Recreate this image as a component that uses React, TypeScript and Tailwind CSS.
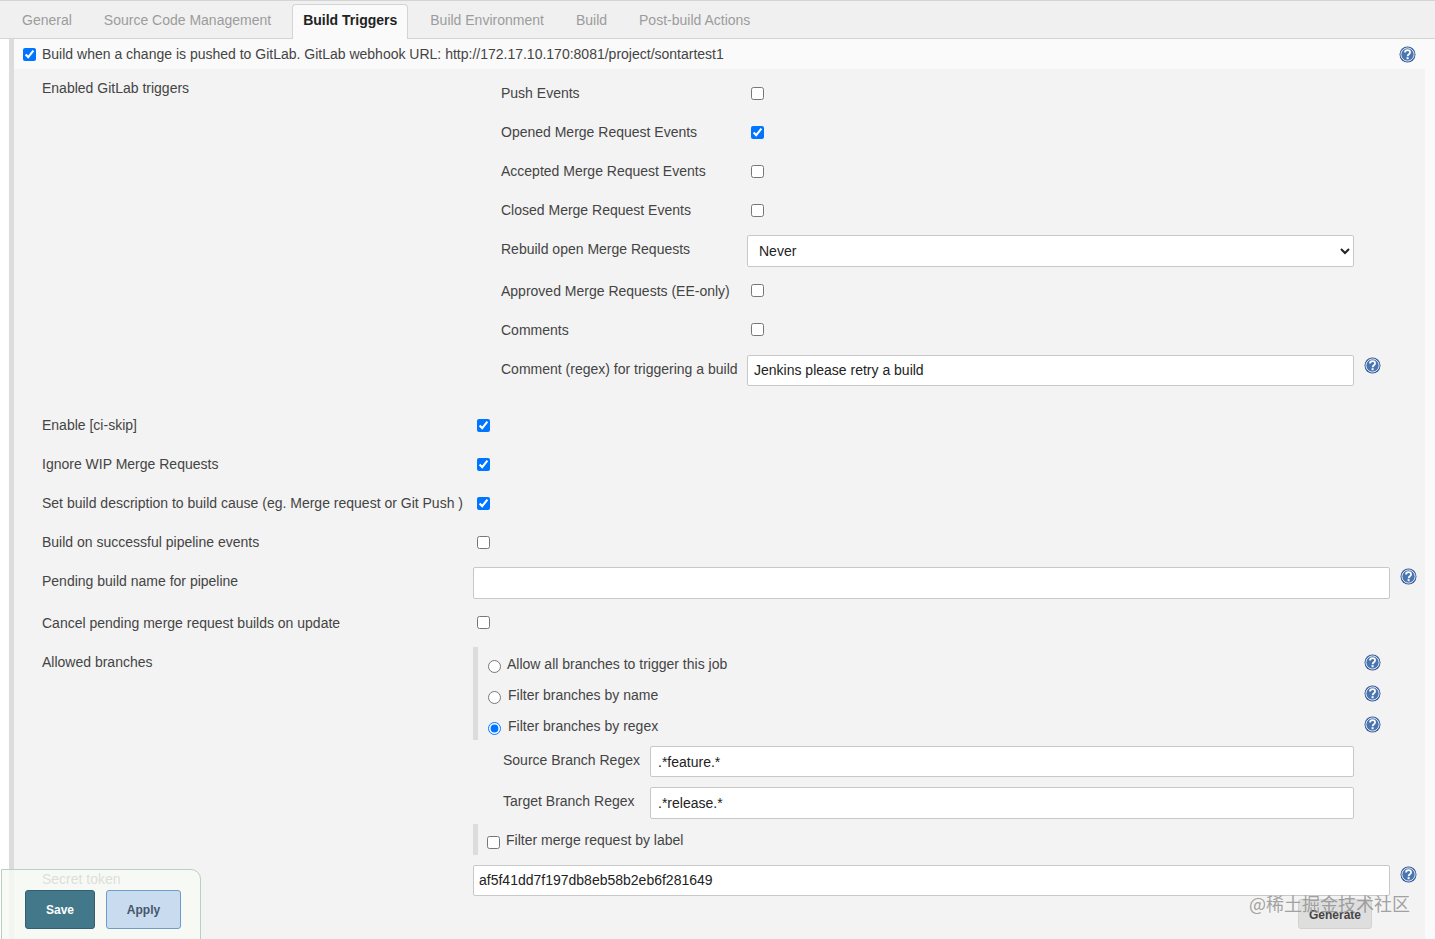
import type { ReactNode } from 'react';

const font = { sans: 'font-["Liberation_Sans",Arial,sans-serif]' };

const tabs = ['General', 'Source Code Management', 'Build Triggers', 'Build Environment', 'Build', 'Post-build Actions'];

function Help() {
  return (
    <svg width="17" height="17" viewBox="0 0 17 17" className="block">
      <circle cx="8.5" cy="8.5" r="8" fill="#2f5597" />
      <circle cx="8.5" cy="8.5" r="6.6" fill="#4a76b0" stroke="#e8eef6" strokeWidth="1" />
      <path d="M6 6.6c0-1.6 1.2-2.4 2.5-2.4s2.6.8 2.6 2.2c0 1.9-2.5 1.9-2.5 3.8" fill="none" stroke="#fff" strokeWidth="1.7" />
      <rect x="7.6" y="11.2" width="2" height="2" fill="#fff" />
    </svg>
  );
}

function Check({ on = false }: { on?: boolean }) {
  return <input type="checkbox" defaultChecked={on} className="block w-[13px] h-[13px]" />;
}

function TextInput({ value = '', className = '' }: { value?: string; className?: string }) {
  return (
    <input
      type="text"
      defaultValue={value}
      className={`block bg-white border border-[#c8c8c8] rounded-[2px] text-[14px] text-[#222] outline-none ${className}`}
    />
  );
}

// row of the nested trigger table, x 473 and on
function TriggerRow({ label, children, className = 'h-[39px]', labelClass = '' }: { label: string; children: ReactNode; className?: string; labelClass?: string }) {
  return (
    <div className={`flex items-center pl-[28px] ${className}`}>
      <div className={`w-[246px] shrink-0 ${labelClass}`}>{label}</div>
      {children}
    </div>
  );
}

// row of the outer form, x 42 and on
function FormRow({ label, children, className = 'h-[39px] items-center', labelClass = '' }: { label: string; children: ReactNode; className?: string; labelClass?: string }) {
  return (
    <div className={`flex pl-[28px] ${className}`}>
      <div className={`w-[431px] shrink-0 ${labelClass}`}>{label}</div>
      {children}
    </div>
  );
}

function BranchRadio({ label, on = false, gap }: { label: string; on?: boolean; gap: string }) {
  return (
    <div className="h-[31px] flex items-center pl-[10px] pr-[44px]">
      <input type="radio" name="branches" defaultChecked={on} className={`block w-[13px] h-[13px] mt-[8px] ${gap}`} />
      <span className="flex-1 mt-[4px]">{label}</span>
      <Help />
    </div>
  );
}

export default function App() {
  return (
    <div className={`relative w-[1435px] h-[939px] overflow-hidden bg-[#fafafa] text-[14px] text-[#444] ${font.sans}`}>
      {/* Tabs */}
      <div className="flex items-end h-[39px] pl-[6px] bg-[#f0f0f0] border-t border-b border-[#d4d4d4]">
        {tabs.map((t) =>
          t === 'Build Triggers' ? (
            <div key={t} className="h-[35px] ml-[5px] mr-[6px] -mb-px px-[10px] pt-[5px] bg-[#fafafa] border border-b-0 border-[#d4d4d4] rounded-t-[4px] font-bold text-[#222]">
              {t}
            </div>
          ) : (
            <div key={t} className="h-[34px] px-[16px] pt-[6px] text-[#9c9c9c]">
              {t}
            </div>
          ),
        )}
      </div>

      <div className="flex h-[900px]">
        <div className="w-[9px] bg-white shrink-0" />
        <div className="w-[5px] bg-[#dcdcdc] shrink-0" />
        <div className="w-[1411px] shrink-0 bg-[#f3f3f3]">
          {/* Top checkbox row */}
          <div className="flex items-center h-[30px] pl-[9px] pr-[9px] bg-[#fafafa]">
            <Check on />
            <span className="ml-[6px] flex-1">
              Build when a change is pushed to GitLab. GitLab webhook URL: http://172.17.10.170:8081/project/sontartest1
            </span>
            <Help />
          </div>

          {/* Enabled triggers */}
          <FormRow label="Enabled GitLab triggers" className="pt-[5px] h-[337px] items-start" labelClass="mt-[4px]">
            <div className="flex-1">
              <TriggerRow label="Push Events"><div className="ml-[4px]"><Check /></div></TriggerRow>
              <TriggerRow label="Opened Merge Request Events"><div className="ml-[4px]"><Check on /></div></TriggerRow>
              <TriggerRow label="Accepted Merge Request Events"><div className="ml-[4px]"><Check /></div></TriggerRow>
              <TriggerRow label="Closed Merge Request Events"><div className="ml-[4px]"><Check /></div></TriggerRow>
              <TriggerRow label="Rebuild open Merge Requests" className="h-[41px]" labelClass="-mt-[2px]">
                <select className="block w-[607px] h-[32px] pl-[7px] bg-white border border-[#c8c8c8] rounded-[2px] text-[#222] outline-none">
                  <option>Never</option>
                </select>
              </TriggerRow>
              <TriggerRow label="Approved Merge Requests (EE-only)" labelClass="mt-[2px]"><div className="ml-[4px]"><Check /></div></TriggerRow>
              <TriggerRow label="Comments" labelClass="mt-[2px]"><div className="ml-[4px]"><Check /></div></TriggerRow>
              <TriggerRow label="Comment (regex) for triggering a build" className="h-[42px]" labelClass="-mt-[2px]">
                <TextInput value="Jenkins please retry a build" className="w-[607px] h-[31px] px-[6px]" />
                <div className="ml-[10px] -mt-[10px]"><Help /></div>
              </TriggerRow>
            </div>
          </FormRow>

          <FormRow label="Enable [ci-skip]"><div className="ml-[4px]"><Check on /></div></FormRow>
          <FormRow label="Ignore WIP Merge Requests"><div className="ml-[4px]"><Check on /></div></FormRow>
          <FormRow label="Set build description to build cause (eg. Merge request or Git Push )"><div className="ml-[4px]"><Check on /></div></FormRow>
          <FormRow label="Build on successful pipeline events"><div className="ml-[4px]"><Check /></div></FormRow>
          <FormRow label="Pending build name for pipeline" className="h-[41px] items-center" labelClass="-mt-[2px]">
            <TextInput className="w-[917px] h-[32px] px-[6px]" />
            <div className="ml-[10px] -mt-[12px]"><Help /></div>
          </FormRow>
          <FormRow label="Cancel pending merge request builds on update" className="h-[39px] items-center" labelClass="mt-[2px]">
            <div className="ml-[4px]"><Check /></div>
          </FormRow>

          {/* Allowed branches */}
          <FormRow label="Allowed branches" className="items-start h-[223px] pt-[5px]" labelClass="mt-[5px]">
            <div className="flex-1">
              <div className="border-l-[5px] border-[#dcdcdc] h-[93px]">
                <BranchRadio label="Allow all branches to trigger this job" gap="mr-[6px]" />
                <BranchRadio label="Filter branches by name" gap="mr-[7px]" />
                <BranchRadio label="Filter branches by regex" on gap="mr-[7px]" />
              </div>
              <div className="flex items-center h-[41px] mt-[1px] pl-[30px]">
                <span className="w-[147px] shrink-0 -mt-[3px]">Source Branch Regex</span>
                <TextInput value=".*feature.*" className="w-[704px] h-[31px] px-[7px]" />
              </div>
              <div className="flex items-center h-[42px] pl-[30px] pb-[1px]">
                <span className="w-[147px] shrink-0 -mt-[3px]">Target Branch Regex</span>
                <TextInput value=".*release.*" className="w-[704px] h-[32px] px-[7px]" />
              </div>
              <div className="flex items-center border-l-[5px] border-[#dcdcdc] h-[31px] pl-[9px]">
                <input type="checkbox" className="block w-[13px] h-[13px] mt-[6px] mr-[6px]" />
                <span className="mt-[1px]">Filter merge request by label</span>
              </div>
            </div>
          </FormRow>

          <FormRow label="Secret token" className="items-start h-[34px] pt-[5px]" labelClass="-mt-[1px]">
            <div className="-mt-[5px] flex">
              <TextInput value="af5f41dd7f197db8eb58b2eb6f281649" className="w-[917px] h-[31px] px-[5px] pb-[2px]" />
              <div className="ml-[10px] mt-[1px]"><Help /></div>
            </div>
          </FormRow>
          <div className="flex justify-end pr-[53px]">
            <div className="flex items-center justify-center w-[74px] h-[30px] pt-[2px] bg-[#dedede] border border-[#d2d2d2] rounded-[3px] text-[12px] font-bold text-[#444]">
              Generate
            </div>
          </div>
        </div>
      </div>

      {/* Sticky save bar */}
      <div className="absolute left-[1px] top-[869px] w-[200px] h-[80px] flex gap-[11px] pl-[23px] pt-[20px] bg-[#f7f9f4]/85 border border-[#b9cfc3] rounded-tr-[10px]">
        <div className="flex items-center justify-center w-[70px] h-[39px] bg-[#43788a] border border-[#33606f] rounded-[3px] text-[12px] font-bold text-white">
          Save
        </div>
        <div className="flex items-center justify-center w-[75px] h-[39px] bg-[#c9dbee] border border-[#6f9cc8] rounded-[3px] text-[12px] font-bold text-[#46566b]">
          Apply
        </div>
      </div>

      {/* Watermark */}
      <div className='absolute left-[1249px] top-[892px] text-[18px] leading-[22px] text-[#8c8c8c]/80 font-["Noto_Sans_CJK_SC",sans-serif]'>
        @稀土掘金技术社区
      </div>
    </div>
  );
}
